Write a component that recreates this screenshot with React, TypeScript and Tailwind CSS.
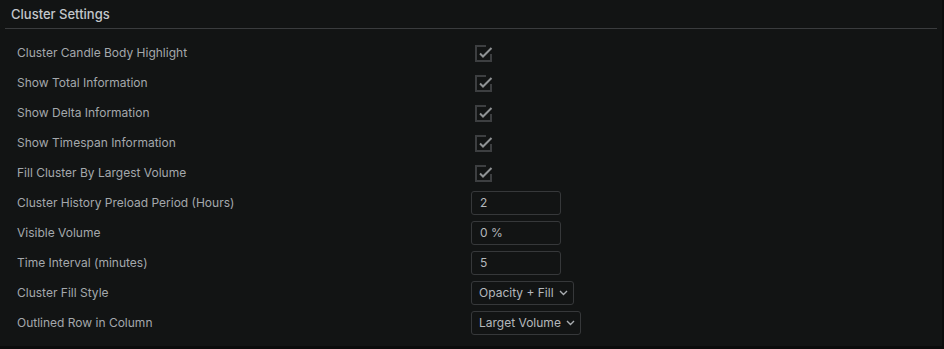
import React from "react";

type Row =
  | { label: string; kind: "check" }
  | { label: string; kind: "input"; value: string }
  | { label: string; kind: "select"; value: string };

const rows: Row[] = [
  { label: "Cluster Candle Body Highlight", kind: "check" },
  { label: "Show Total Information", kind: "check" },
  { label: "Show Delta Information", kind: "check" },
  { label: "Show Timespan Information", kind: "check" },
  { label: "Fill Cluster By Largest Volume", kind: "check" },
  { label: "Cluster History Preload Period (Hours)", kind: "input", value: "2" },
  { label: "Visible Volume", kind: "input", value: "0 %" },
  { label: "Time Interval (minutes)", kind: "input", value: "5" },
  { label: "Cluster Fill Style", kind: "select", value: "Opacity + Fill" },
  { label: "Outlined Row in Column", kind: "select", value: "Larget Volume" },
];

const CheckIcon = () => (
  <svg width="18" height="17" viewBox="0 0 18 17" fill="none" className="ml-[4px]">
    {/* box with the top-right corner left open for the tick */}
    <path d="M11 1H1V16H16V9" stroke="#3d3f41" strokeWidth="2" />
    <path d="M5 8.5L8 11.5L16.5 3" stroke="#8f9294" strokeWidth="2" />
  </svg>
);

const Chevron = () => (
  <svg width="9" height="6" viewBox="0 0 9 6" fill="none">
    <path d="M1 1L4.5 4.5L8 1" stroke="#a9adb1" strokeWidth="1.4" />
  </svg>
);

const Control = ({ row }: { row: Row }) => {
  if (row.kind === "check") return <CheckIcon />;
  if (row.kind === "input")
    return (
      <div className="flex h-[24px] w-[90px] items-center rounded-[3px] border border-[#36383a] px-[8px] text-[#b4b8bc]">
        {row.value}
      </div>
    );
  return (
    <div className="flex h-[24px] items-center gap-[5px] rounded-[3px] border border-[#36383a] pl-[7px] pr-[5px] text-[#b4b8bc]">
      <span>{row.value}</span>
      <Chevron />
    </div>
  );
};

export default function App() {
  return (
    <div className="h-[349px] w-[944px] bg-[#0b0c0c] font-['Inter',sans-serif] text-[12px]">
      <div className="h-[346px] w-[942px] bg-[#121414]">
        <div className="mx-[5px] flex h-[29px] items-center border-b border-[#3a3c3e] pl-[6px] pt-[2px] text-[13px] font-medium text-[#c3c7cb]">
          Cluster Settings
        </div>
        <div className="pt-[9px]">
          {rows.map((row) => (
            <div key={row.label} className="grid h-[30px] grid-cols-[471px_1fr] items-center">
              <span className="pl-[17px] text-[#a4a8ac]">{row.label}</span>
              <div className="flex">
                <Control row={row} />
              </div>
            </div>
          ))}
        </div>
      </div>
    </div>
  );
}
